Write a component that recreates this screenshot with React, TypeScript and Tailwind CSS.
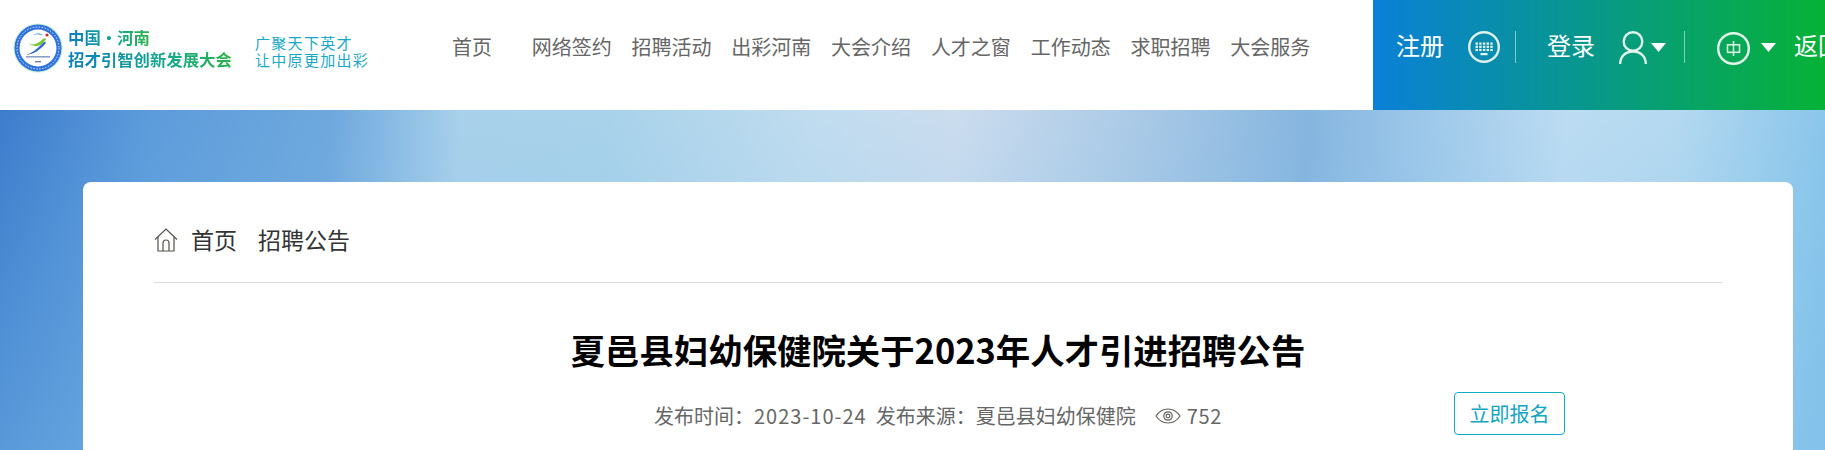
const cjk = "font-['Microsoft_YaHei','Noto_Sans_CJK_SC','Noto_Sans',sans-serif]";

const navItems = ["首页", "网络签约", "招聘活动", "出彩河南", "大会介绍", "人才之窗", "工作动态", "求职招聘", "大会服务"];

const Logo = () => (
  <svg width="50" height="50" viewBox="0 0 50 50" className="shrink-0">
    <circle cx="25" cy="25" r="24.5" fill="#c5efd6" />
    <circle cx="25" cy="25" r="23.5" fill="#2f72dc" />
    <circle cx="25" cy="25" r="21" fill="none" stroke="#dbe8fb" strokeWidth="1" strokeDasharray="1.5 1.5" />
    <circle cx="25" cy="25" r="18.5" fill="#fff" />
    <path d="M15 20c5 3 10 1 15-4 1-1 3-1 3 0-3 6-10 10-18 4z" fill="#72c82c" />
    <path d="M13 32c6-2 11-6 16-11 3-3 5-3 3 0-5 6-11 10-19 11z" fill="#2b63c8" />
    <path d="M20 12c3-2 8-2 10 0-4-1-7-1-10 0z" fill="#2b8fd0" />
    <circle cx="34" cy="12" r="1.6" fill="#d8282f" />
    <rect x="13" y="33" width="24" height="1.6" fill="#8aa0c8" />
    <rect x="22" y="38" width="6" height="1.4" fill="#6d7fa5" />
  </svg>
);

const Caret = () => (
  <svg width="15" height="9" viewBox="0 0 15 9" className="shrink-0">
    <path d="M0 0h15L7.500 9z" fill="#fff" />
  </svg>
);

const KeyboardIcon = () => (
  <svg width="32" height="32" viewBox="0 0 32 32" className="shrink-0" fill="none">
    <circle cx="16" cy="16" r="14.800" stroke="#dff1ee" strokeWidth="2.400" />
    <g fill="#eaf7f5">
      {[0, 1, 2].map((row) =>
        [0, 1, 2, 3, 4].map((i) => (
          <rect key={`${row}-${i}`} x={7.500 + i * 3.700} y={11.500 + row * 3.200} width="2.400" height="2.200" />
        )),
      )}
      <rect x="12.500" y="22" width="7" height="2.200" />
    </g>
  </svg>
);

const UserIcon = () => (
  <svg width="28" height="33" viewBox="0 0 28 33" className="shrink-0" fill="none">
    <circle cx="14" cy="10.500" r="9.300" stroke="#e0f3ec" strokeWidth="2.400" />
    <path d="M1.200 33c0-7.500 5.300-12.500 12.800-12.500S26.800 25.500 26.800 33" stroke="#e0f3ec" strokeWidth="2.400" />
  </svg>
);

const LangIcon = () => (
  <svg width="33" height="33" viewBox="0 0 33 33" className="shrink-0" fill="none">
    <circle cx="16.500" cy="16.500" r="15.300" stroke="#e4f6ea" strokeWidth="2.400" />
    <rect x="10.500" y="12.800" width="12" height="7.500" stroke="#d5efdc" strokeWidth="1.600" />
    <path d="M16.500 9v15" stroke="#d5efdc" strokeWidth="1.600" />
  </svg>
);

const HomeIcon = () => (
  <svg width="24" height="24" viewBox="0 0 24 24" className="shrink-0" fill="none" stroke="#55504a" strokeWidth="1.200">
    <path d="M1 11.500 12 1l11 10.500" />
    <path d="M4 9v14h16V9" />
    <path d="M9 23v-8a3 3 0 0 1 6 0v8" />
  </svg>
);

const EyeIcon = () => (
  <svg width="26" height="16" viewBox="0 0 26 16" className="shrink-0" fill="none" stroke="#66625e" strokeWidth="1.200">
    <path d="M1 8c3-4.500 7-7 12-7s9 2.500 12 7c-3 4.500-7 7-12 7S4 12.500 1 8z" />
    <circle cx="13" cy="8" r="4.200" />
    <circle cx="13" cy="8" r="1.800" />
  </svg>
);

const App = () => {
  return (
    <div className={`h-[450px] w-[1825px] overflow-hidden bg-white ${cjk}`}>
      <header className="flex h-[110px] items-stretch bg-white">
        <div className="flex w-[1373px] shrink-0">
          <div className="ml-[13px] mt-[23px]">
            <Logo />
          </div>
          <div className="ml-[5px] mt-[26px] w-[180px] font-bold leading-[22px] text-[16.400px]">
            <div className="w-[82px] whitespace-nowrap bg-[linear-gradient(90deg,#0b7fc4,#12a98a_60%,#2fb24a)] bg-clip-text text-transparent">
              中国·河南
            </div>
            <div className="w-[165px] whitespace-nowrap bg-[linear-gradient(90deg,#0b7fc4,#12a98a_60%,#2fb24a)] bg-clip-text text-transparent">
              招才引智创新发展大会
            </div>
          </div>
          <div className="ml-[7px] mt-[34px] w-[130px] text-[15px] leading-[17px] tracking-[1.300px] text-[#1ba7c9]">
            <div>广聚天下英才</div>
            <div>让中原更加出彩</div>
          </div>
          <nav className="ml-[37px] flex h-full items-center">
            {navItems.map((item) => (
              <a key={item} className="w-[99.800px] pb-[16px] text-center text-[20px] text-[#666]">
                {item}
              </a>
            ))}
          </nav>
        </div>
        <div className="flex min-w-0 flex-1 items-center overflow-hidden whitespace-nowrap bg-[linear-gradient(90deg,#0a80d8,#06b236)] pb-[16px] pl-[23px] text-[24px] text-white">
          <span className="mt-[-5px] w-[48px] shrink-0">注册</span>
          <span className="ml-[24px] shrink-0">
            <KeyboardIcon />
          </span>
          <span className="ml-[15px] h-[32px] w-[1px] shrink-0 bg-white/50" />
          <span className="ml-[31px] mt-[-5px] w-[48px] shrink-0">登录</span>
          <span className="ml-[24px] shrink-0">
            <UserIcon />
          </span>
          <span className="ml-[4px] shrink-0">
            <Caret />
          </span>
          <span className="ml-[18px] h-[32px] w-[1px] shrink-0 bg-white/50" />
          <span className="ml-[32px] mt-[3px] shrink-0">
            <LangIcon />
          </span>
          <span className="ml-[11px] shrink-0">
            <Caret />
          </span>
          <span className="ml-[18px] mt-[-5px] shrink-0">返回首页</span>
        </div>
      </header>
      <main className="h-[340px] bg-[linear-gradient(180deg,transparent_0%,rgba(125,190,235,.4)_100%),linear-gradient(93deg,#3c7ccc_0%,#5c9bdb_8%,#6ea8dd_18%,#a8d0ea_25%,#a8d2ea_33%,#c0dcef_44%,#cbdcee_52%,#a9c9e6_62%,#86b5df_71%,#9cc7e9_77%,#bcdcf2_85%,#b4d9f0_91%,#85c3ea_100%)] pl-[83px] pr-[32px] pt-[72px]">
        <div className="h-[300px] rounded-t-[8px] bg-white px-[71px]">
          <div className="flex h-[101px] items-center border-b border-[#dcdcdc] pt-[16px] text-[23px] text-[#333]">
            <span className="flex items-center">
              <HomeIcon />
              <span className="ml-[13px] mt-[-2px]">首页</span>
              <span className="ml-[21px] mt-[-2px]">招聘公告</span>
            </span>
          </div>
          <h1 className="mt-[42px] text-center text-[34.400px] font-bold leading-[48px] text-black">
            夏邑县妇幼保健院关于2023年人才引进招聘公告
          </h1>
          <div className="mt-[19px] flex items-start whitespace-nowrap">
            <div className="ml-[500px] mt-[10px] flex w-[568px] shrink-0 items-center text-[20px] leading-[28px] text-[#666]">
              <span>
                发布时间：<span className="tracking-[1px]">2023-10-24</span>
              </span>
              <span className="ml-[9px]">发布来源：夏邑县妇幼保健院</span>
              <span className="ml-[19px]">
                <EyeIcon />
              </span>
              <span className="ml-[6px] tracking-[0.700px]">752</span>
            </div>
            <button className="ml-[232px] h-[43px] w-[111px] rounded-[4px] border border-[#0fabc9] text-[20px] text-[#12a5c4]">
              立即报名
            </button>
          </div>
        </div>
      </main>
    </div>
  );
};

export default App;
